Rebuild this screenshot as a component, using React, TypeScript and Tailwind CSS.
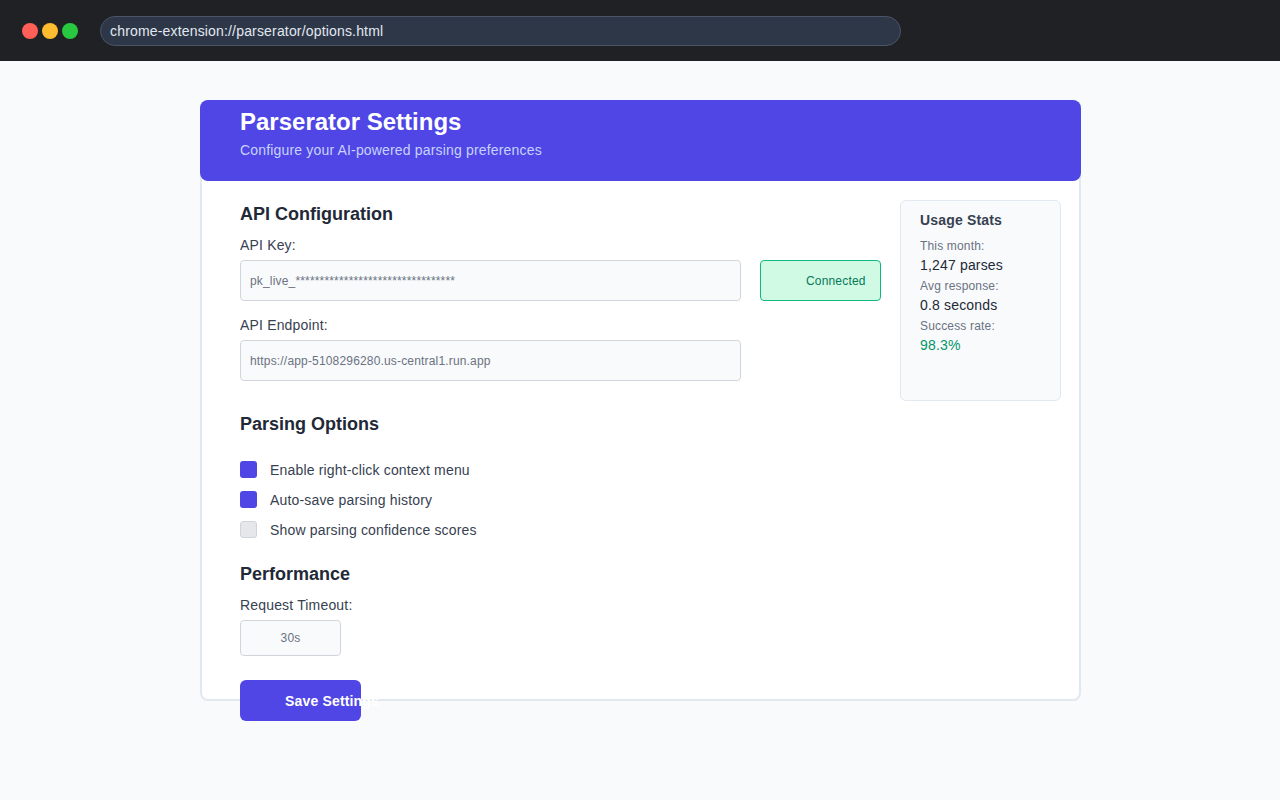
import React from 'react';

const font = { fontFamily: '"Liberation Sans", Arial, sans-serif' };

function Checkbox({ label, checked }: { label: string; checked: boolean }) {
  return (
    <div className="flex items-center h-5 gap-[13px]">
      <span
        className={`w-[17px] h-[17px] rounded-[3px] ${
          checked ? 'bg-[#4f46e5]' : 'bg-[#e5e7eb] border border-[#d1d5db]'
        }`}
      />
      <span className="text-sm leading-5 text-[#374151] pt-px">{label}</span>
    </div>
  );
}

function StatRow({ label, value, green }: { label: string; value: string; green?: boolean }) {
  return (
    <>
      <div className="h-5 leading-5 text-xs text-[#6b7280] pt-px">{label}</div>
      <div className={`h-5 leading-5 text-sm ${green ? 'text-[#059669]' : 'text-[#1f2937]'}`}>{value}</div>
    </>
  );
}

export default function App() {
  return (
    <div className="min-h-[800px] bg-[#f8fafc] tracking-[0.17px]" style={font}>
      <div className="h-[61px] bg-[#202124] flex items-center">
        <div className="flex gap-1 pl-[22px]">
          <span className="w-4 h-4 rounded-full bg-[#ff5f57]" />
          <span className="w-4 h-4 rounded-full bg-[#febc2e]" />
          <span className="w-4 h-4 rounded-full bg-[#28c840]" />
        </div>
        <div className="ml-[22px] w-[801px] h-[30px] rounded-full bg-[#2d3748] border border-[#4a5568] flex items-center pl-[9px] text-sm text-[#e2e8f0]">
          chrome-extension://parserator/options.html
        </div>
      </div>

      <div className="pt-[39px]">
        <div className="w-[881px] ml-[200px] h-[601px] bg-white border-2 border-[#e2e8f0] rounded-lg">
          <div className="-mx-[2px] -mt-[2px] bg-[#4f46e5] rounded-lg pl-10 pt-[8px] pb-[21px]">
            <h1 className="text-2xl leading-7 font-bold text-white tracking-normal">Parserator Settings</h1>
            <p className="mt-[4px] text-sm leading-5 text-[#c7d2fe]">Configure your AI-powered parsing preferences</p>
          </div>

          <div className="flex pl-[38px] pr-[18px]">
            <div className="flex-1 pt-[21px]">
              <h2 className="text-lg leading-6 font-bold text-[#1f2937] tracking-normal">API Configuration</h2>
              <div className="mt-[9px] text-sm leading-5 text-[#374151]">API Key:</div>
              <div className="mt-[5px] flex gap-[19px]">
                <div className="w-[501px] h-[41px] bg-[#f8fafc] border border-[#d1d5db] rounded-[4px] flex items-center pl-[9px] text-xs text-[#6b7280]">
                  pk_live_*********************************
                </div>
                <div className="w-[121px] h-[41px] bg-[#d1fae5] border border-[#10b981] rounded-[4px] flex items-center pl-[45px] text-xs text-[#047857]">
                  Connected
                </div>
              </div>
              <div className="mt-[14px] text-sm leading-5 text-[#374151]">API Endpoint:</div>
              <div className="mt-[5px] w-[501px] h-[41px] bg-[#f8fafc] border border-[#d1d5db] rounded-[4px] flex items-center pl-[9px] text-xs text-[#6b7280]">
                https://app-5108296280.us-central1.run.app
              </div>

              <h2 className="mt-[31px] text-lg leading-6 font-bold text-[#1f2937] tracking-normal">Parsing Options</h2>
              <div className="mt-[23px] flex flex-col gap-[10px]">
                <Checkbox label="Enable right-click context menu" checked />
                <Checkbox label="Auto-save parsing history" checked />
                <Checkbox label="Show parsing confidence scores" checked={false} />
              </div>

              <h2 className="mt-[23px] text-lg leading-6 font-bold text-[#1f2937] tracking-normal">Performance</h2>
              <div className="mt-[9px] text-sm leading-5 text-[#374151]">Request Timeout:</div>
              <div className="mt-[5px] w-[101px] h-[36px] bg-[#f8fafc] border border-[#d1d5db] rounded-[4px] flex items-center justify-center text-xs text-[#6b7280]">
                30s
              </div>
              <button className="mt-[24px] w-[121px] h-[41px] bg-[#4f46e5] rounded-md pl-[45px] text-left text-sm font-bold text-white whitespace-nowrap">
                Save Settings
              </button>
            </div>

            <div className="mt-[19px] ml-[19px] w-[161px] h-[201px] bg-[#f8fafc] border border-[#e2e8f0] rounded-md pl-[19px] pt-[9px]">
              <div className="h-5 leading-5 text-sm font-bold text-[#374151] mb-[5px]">Usage Stats</div>
              <StatRow label="This month:" value="1,247 parses" />
              <StatRow label="Avg response:" value="0.8 seconds" />
              <StatRow label="Success rate:" value="98.3%" green />
            </div>
          </div>
        </div>
      </div>
    </div>
  );
}
